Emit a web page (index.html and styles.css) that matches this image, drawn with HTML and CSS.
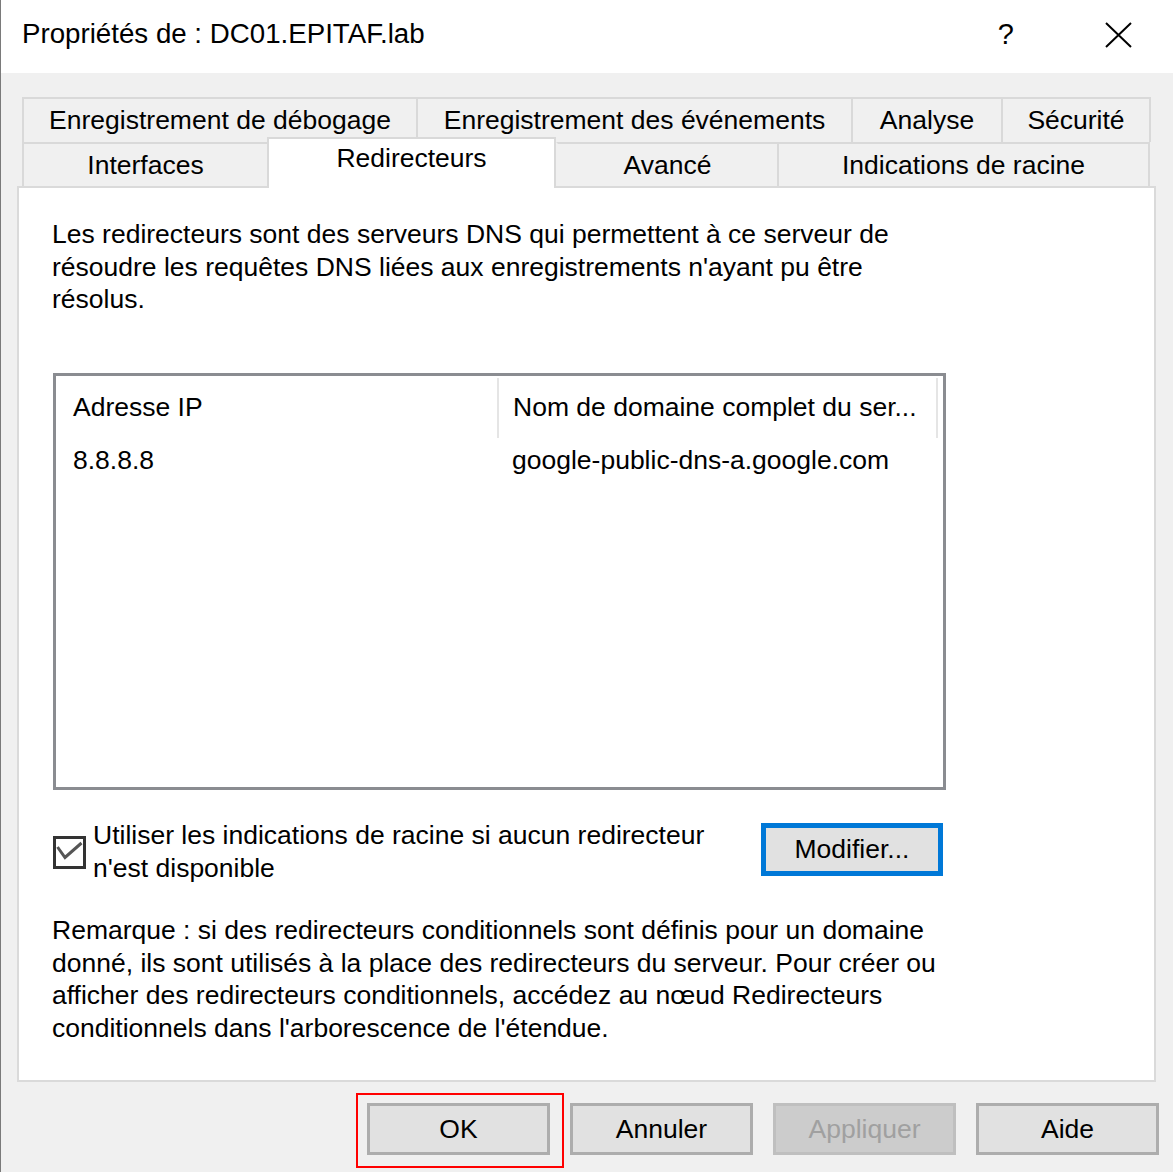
FILE: index.html
```html
<!DOCTYPE html>
<html lang="fr">
<head>
<meta charset="utf-8">
<title>Propriétés de : DC01.EPITAF.lab</title>
<link rel="stylesheet" href="styles.css">
</head>
<body>
<div class="window">
  <div class="titlebar">
    <span class="title">Propriétés de : DC01.EPITAF.lab</span>
    <span class="help">?</span>
    <svg class="close" width="27" height="26" viewBox="0 0 27 26"><path d="M1 1 L26 25 M26 1 L1 25" stroke="#000" stroke-width="2" fill="none"/></svg>
  </div>

  <div class="tabs">
    <div class="tabrow row1">
      <div class="tab t-debug">Enregistrement de débogage</div>
      <div class="tab t-events">Enregistrement des événements</div>
      <div class="tab t-analyse">Analyse</div>
      <div class="tab t-secu last">Sécurité</div>
    </div>
    <div class="tabrow row2">
      <div class="tab t-if">Interfaces</div>
      <div class="tab t-redir selected">Redirecteurs</div>
      <div class="tab t-avance">Avancé</div>
      <div class="tab t-racine last">Indications de racine</div>
    </div>
  </div>

  <div class="panel">
    <p class="desc">Les redirecteurs sont des serveurs DNS qui permettent à ce serveur de résoudre les requêtes DNS liées aux enregistrements n'ayant pu être résolus.</p>

    <div class="listbox">
      <div class="lb-head">
        <div class="cell c1">Adresse IP</div>
        <div class="cell c2">Nom de domaine complet du ser...</div>
      </div>
      <div class="lb-row">
        <div class="rcell c1">8.8.8.8</div>
        <div class="rcell c2">google-public-dns-a.google.com</div>
      </div>
    </div>

    <div class="check-row">
      <div class="checkbox">
        <svg width="27" height="27" viewBox="0 0 27 27"><path d="M1.5 8 L9 18.5 L25.5 4" stroke="#555" stroke-width="3" fill="none"/></svg>
      </div>
      <label class="check-label">Utiliser les indications de racine si aucun redirecteur n'est disponible</label>
      <button class="btn btn-modify">Modifier...</button>
    </div>

    <p class="note">Remarque : si des redirecteurs conditionnels sont définis pour un domaine donné, ils sont utilisés à la place des redirecteurs du serveur. Pour créer ou afficher des redirecteurs conditionnels, accédez au nœud Redirecteurs conditionnels dans l'arborescence de l'étendue.</p>
  </div>

  <div class="buttons">
    <div class="ok-wrap">
      <button class="btn btn-bottom">OK</button>
      <span class="highlight"></span>
    </div>
    <button class="btn btn-bottom">Annuler</button>
    <button class="btn btn-bottom disabled">Appliquer</button>
    <button class="btn btn-bottom">Aide</button>
  </div>
</div>
</body>
</html>
```

FILE: styles.css
```css
html, body {
  margin: 0;
  padding: 0;
  background: #f0f0f0;
}

.window {
  width: 1173px;
  height: 1172px;
  box-sizing: border-box;
  border-left: 1px solid #7a7a7a;
  background: #f0f0f0;
  overflow: hidden;
  font-family: "Liberation Sans", Arial, sans-serif;
  font-size: 26.5px;
  line-height: 32.5px;
  color: #000;
}

.titlebar {
  height: 73px;
  background: #fff;
  display: flex;
  align-items: flex-start;
  padding-left: 21px;
  padding-right: 41px;
  box-sizing: border-box;
}

.title {
  font-size: 27.7px;
  line-height: 32px;
  margin-top: 18px;
}

.help {
  margin-left: auto;
  font-size: 29px;
  line-height: 32px;
  margin-top: 18px;
}

.close {
  margin-left: 91px;
  margin-top: 22px;
}

/* Tabs */
.tabs {
  margin-top: 24px;
  margin-left: 21px;
}

.tabrow {
  display: flex;
}

.row1 {
  height: 45px;
}

.row2 {
  height: 44px;
}

.tab {
  box-sizing: border-box;
  border-top: 2px solid #d9d9d9;
  border-left: 2px solid #d9d9d9;
  background: #f0f0f0;
  display: flex;
  align-items: center;
  justify-content: center;
  white-space: nowrap;
}

.row1 .tab { height: 45px; }
.row2 .tab { height: 44px; }

.tab.last {
  border-right: 2px solid #d9d9d9;
}

.t-debug { width: 394px; }
.t-events { width: 435px; }
.t-analyse { width: 150px; }
.t-secu { width: 150px; }

.t-if { width: 245px; }
.t-redir { width: 289px; }
.t-avance { width: 221px; }
.t-racine { width: 373px; }

.tab.selected {
  position: relative;
  z-index: 2;
  background: #fff;
  border-right: 2px solid #d9d9d9;
  margin-top: -5px;
  height: 51px;
  padding-bottom: 10px;
}

.t-redir + .tab {
  border-left-color: transparent;
}

/* Panel */
.panel {
  position: relative;
  z-index: 1;
  margin-left: 16px;
  width: 1139px;
  height: 896px;
  box-sizing: border-box;
  background: #fff;
  border: 2px solid #dadada;
  padding-left: 33px;
}

.desc {
  margin: 30px 0 0 0;
  width: 870px;
}

.listbox {
  margin-top: 57px;
  margin-left: 1px;
  width: 893px;
  height: 417px;
  box-sizing: border-box;
  border: 3px solid #8a8c91;
}

.lb-head {
  display: flex;
  padding-top: 2px;
}

.cell {
  box-sizing: border-box;
  height: 60px;
  padding-top: 13.5px;
  border-right: 2px solid #e5e5e5;
  white-space: nowrap;
}

.c1 {
  width: 443px;
  padding-left: 17px;
}

.c2 {
  width: 439px;
  padding-left: 14px;
}

.lb-row {
  display: flex;
  padding-top: 6.5px;
}

.rcell {
  box-sizing: border-box;
  white-space: nowrap;
}

.lb-row .c2 {
  padding-left: 13px;
}

.check-row {
  display: flex;
  align-items: flex-start;
  margin-top: 29.5px;
}

.checkbox {
  width: 33px;
  height: 33px;
  box-sizing: border-box;
  border: 3px solid #333;
  margin-top: 16.5px;
  margin-left: 1px;
  flex: none;
}

.checkbox svg {
  display: block;
}

.check-label {
  width: 640px;
  margin-left: 7px;
}

.btn {
  font-family: "Liberation Sans", Arial, sans-serif;
  font-size: 26.5px;
  line-height: 32.5px;
  color: #000;
  background: #e1e1e1;
  box-sizing: border-box;
  padding: 0;
  margin: 0;
}

.btn-modify {
  margin-left: 28px;
  margin-top: 3.5px;
  width: 182px;
  height: 53px;
  border: 5px solid #0078d7;
}

.note {
  margin: 30px 0 0 0;
  width: 950px;
}

/* Bottom buttons */
.buttons {
  display: flex;
  justify-content: flex-end;
  gap: 20px;
  margin-top: 21px;
  padding-right: 14px;
}

.ok-wrap {
  position: relative;
  display: flex;
}

.btn-bottom {
  width: 183px;
  height: 52px;
  border: 3px solid #adadad;
}

.btn-bottom.disabled {
  background: #cccccc;
  border-color: #bfbfbf;
  color: #a0a0a0;
}

.highlight {
  position: absolute;
  left: -11px;
  top: -10px;
  width: 208px;
  height: 75px;
  box-sizing: border-box;
  border: 2px solid #ff0000;
  pointer-events: none;
}
```
